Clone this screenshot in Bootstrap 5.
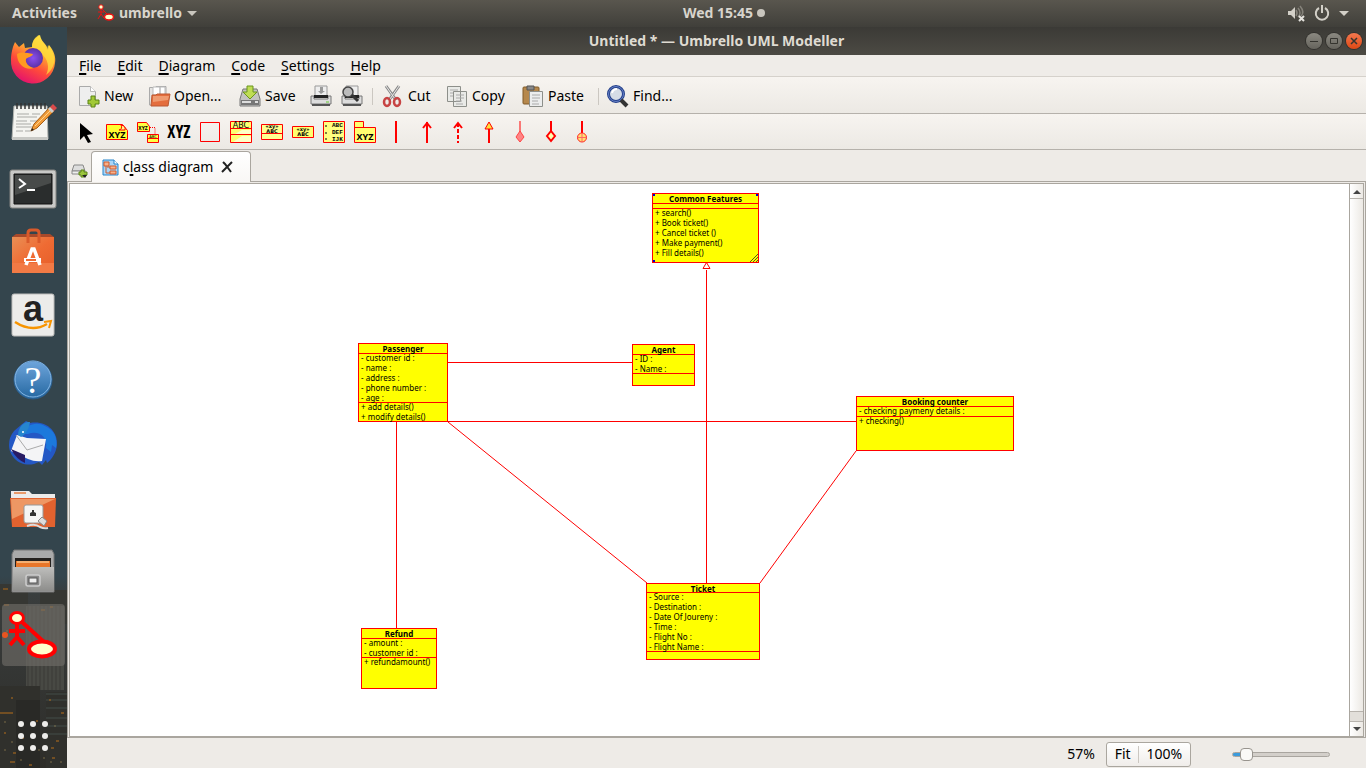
<!DOCTYPE html>
<html lang="en">
<head>
<meta charset="utf-8">
<meta name="viewport" content="width=device-width, initial-scale=1">
<title>Untitled * — Umbrello UML Modeller</title>
<link rel="stylesheet" href="https://cdn.jsdelivr.net/npm/bootstrap@5.3.0/dist/css/bootstrap.min.css">
<style>
body{font-family:"Noto Sans","Open Sans",sans-serif;font-size:14px;line-height:20px;color:#000;background:#eeebe7}
button{font:inherit;color:inherit;background:none;border:0;padding:0}
svg{display:block;flex:none;overflow:visible}
u{text-underline-offset:2px;text-decoration-thickness:2px}
.topbar{height:27px;background:linear-gradient(#59564e,#403f3a);color:#d8d5cd;font-weight:700;font-size:14px;padding-bottom:1px}
.topbar .leading{flex:0 0 50%}
.dock{width:67px;background:#34454d;position:relative}
.dock .skyline{position:absolute;left:0;bottom:0;width:67px;height:192px}
.dock button{height:64px;width:67px;position:relative;flex:none}
.dock .running svg{background:#73706b99;border-radius:4px}
.titlebar{height:28px;background:linear-gradient(#3b3a36,#4c4a44);color:#dfdbd2;font-weight:700;font-size:14px;display:grid;grid-template-columns:68px 1fr 68px}
.wbtn{width:16px;height:16px;border-radius:50%;background:linear-gradient(#8b8981,#66645d);box-shadow:0 0 0 1px #33322e}
.wbtn.quit{background:linear-gradient(#f5784f,#dd4814)}
.menubar{height:22px;border-bottom:1px solid #d5d1cb;background:#efece8}
.menubar a{color:#000;text-decoration:none}
.bar{height:37px;background:linear-gradient(#f7f4f0,#ece9e4);border-bottom:1px solid #b5b1ab}
.files{display:grid;grid-template-columns:70px 91px 71px 31px 31px 10px 64px 76px 76px 9px 80px;align-items:center;padding:2px 0 0 11px}
.files button{display:flex;align-items:center;gap:4px;white-space:nowrap}
.vsep{width:1px;height:17px;background:#cbc7c1}
.tools{display:grid;grid-template-columns:repeat(17,31px);height:36px;align-items:center}
.tools svg,.files svg{width:22px;height:22px}
.tabs{height:31px}
.doc-tab{height:31px;width:160px;border:1px solid #aaa69f;border-bottom:0;border-radius:4px 4px 0 0;background:linear-gradient(#fff,#f9f7f5);margin-bottom:-1px;position:relative;padding:0 10px}
.pane{border:1px solid #aaa69f;padding:1px 1px 0;min-height:0}
.frame{border:1px solid #aaa69f;background:#fff;min-height:0}
.canvas{position:relative;overflow:hidden}
.links{position:absolute;left:0;top:0;width:100%;height:100%}
.links path{fill:none;stroke:#f00}
.node{position:absolute;background:#ff0;border:1px solid #f00;font-size:8px;line-height:10px;white-space:nowrap}
.node h2{font-size:8px;line-height:10px;height:10px;margin:0;font-weight:700;text-align:center;border-bottom:1px solid #f00}
.node ul{list-style:none;margin:-1px 0 0;padding:0 0 0 2px}
.node ul.attrs{border-bottom:1px solid #f00}
#common{left:582px;top:9px;width:107px;height:70px}
#common .attrs{height:6px}
#passenger{left:288px;top:159px;width:90px;height:79px}
#passenger .attrs{height:50px}
#agent{left:562px;top:160px;width:63px;height:42px}
#agent .attrs{height:20px}
#booking{left:786px;top:212px;width:158px;height:55px}
#booking .attrs{height:11px}
#refund{left:291px;top:444px;width:76px;height:61px}
#refund .attrs{height:20px}
#ticket{left:576px;top:399px;width:114px;height:77px}
#ticket .attrs{height:60px}
#ticket h2{height:9px}
.grip{position:absolute}
.scroller{width:14px;border-left:1px solid #aaa69f;background:#e2dfda}
.scroller button{height:14px;background:linear-gradient(90deg,#fff,#ece9e4);display:flex;align-items:center;justify-content:center;flex:none}
.scroller .thumb{background:linear-gradient(90deg,#fff,#ece9e4);border:1px solid #b7b3ad;border-width:1px 0}
.scroller .groove{height:10px;border-bottom:1px solid #b7b3ad}
.statusbar{height:30px;padding:2px 36px 0 0}
.zoomset{border:1px solid #aaa69f;border-radius:3px;background:linear-gradient(#fff,#f0edea);height:25px;width:85px;margin:0 41px 0 11px}
.zoom-range{appearance:none;width:98px;height:20px;background:none;margin:0}
.zoom-range::-webkit-slider-runnable-track{height:5px;border:1px solid #a9a59f;border-radius:3px;background:linear-gradient(90deg,#3c9bdc 8px,#d3cfca 8px)}
.zoom-range::-webkit-slider-thumb{appearance:none;width:13px;height:13px;margin-top:-5px;background:#faf9f7;border:1px solid #98948e;border-radius:4px}
</style>
</head>
<body>
<div class="vh-100 d-flex flex-column overflow-hidden">
<header class="topbar d-flex align-items-center flex-shrink-0">
  <div class="leading d-flex align-items-center">
    <button class="ms-2 ps-1">Activities</button>
    <button class="d-flex align-items-center ms-3 ps-1">
      <svg width="18" height="18" viewBox="0 0 18 18"><g stroke="#e11" stroke-width="1" fill="none"><path d="M4 5v6M1 8h6M4 10l-3 5M4 10l3 4M5 5l6 6"/><circle cx="4" cy="3" r="2.200" fill="#ffc"/><ellipse cx="12" cy="13" rx="4.500" ry="3" fill="#ffc" stroke-width="1.500"/></g></svg>
      <span class="ms-1">umbrello</span>
      <svg class="ms-1" width="12" height="8" viewBox="0 0 12 8"><path d="M1 2h10L6 7z" fill="#c9c6be"/></svg>
    </button>
  </div>
  <button class="d-flex align-items-center gap-1 flex-shrink-0">Wed 15:45 <svg width="8" height="8"><circle cx="4" cy="4" r="4" fill="#c9c6be"/></svg></button>
  <div class="d-flex align-items-center justify-content-end gap-2 pe-3 flex-grow-1">
    <svg width="19" height="18" viewBox="0 0 19 18"><path d="M1 7h3l4-4v12l-4-4H1z" fill="#d3d0c8"/><path d="M9 6q2 3 0 6M11 4q4 5 0 9M13 2q5 6 1 10" stroke="#85827a" fill="none" stroke-width="1.500"/><path d="M12 12l5 5m0-5l-5 5" stroke="#e5e3de" stroke-width="2"/></svg>
    <svg width="16" height="16" viewBox="0 0 16 16"><path d="M5 3a6.200 6.200 0 1 0 6 0M8 0v8" fill="none" stroke="#d3d0c8" stroke-width="2"/></svg>
    <svg width="12" height="8" viewBox="0 0 12 8"><path d="M1 2h10L6 7z" fill="#d3d0c8"/></svg>
  </div>
</header>
<div class="d-flex flex-grow-1" style="min-height:0">
<nav class="dock d-flex flex-column flex-shrink-0" aria-label="Dock">
  <svg class="skyline" viewBox="0 0 67 192"><defs><linearGradient id="dusk" x2="0" y2="1"><stop stop-color="#34454d"/><stop offset=".1" stop-color="#393d3d"/><stop offset="1" stop-color="#2e2d29"/></linearGradient></defs><path fill="url(#dusk)" d="M0 0h67v192H0z"/><path d="M0 8h12l2-4h14v30H0zM40 14h27v34H40z" fill="#363733"/><path d="M26 30h38v84H26z" fill="#484944"/><path d="M28 30v84m4-84v84m4-84v84m4-84v84m4-84v84m4-84v84m4-84v84m4-84v84m4-84v84" stroke="#3b3b37"/><path d="M0 110h40v82H0zM46 116h21v76H46z" fill="#30302c"/><path d="M16 124h24v68H16z" fill="#292926"/><path d="M46 118h21M46 124h21m-21 8h21m-21 10h21M44 150h23m-23 8h23" stroke="#434c48"/><path d="M0 137h13M3 13h5m22 2h6m14 16h3M4 29h5m32 5h4M6 55h2m40 21h3M11 122h2m36 2h2m10 13h3M4 157h2m16 5h2m12-17h2m13 27h3m-41 5h3m40-12h3m-49 21h5m14 3h3m20-7h3" stroke="#98601f" stroke-width="2" opacity=".65"/><path d="M4 174h2m5-8h2m7 18h2m16-10h2m10 12h2M54 150h2M4 146h2m54 40h2M43 182h2" stroke="#a9915b" opacity=".6"/></svg>
  <button aria-label="Firefox"><svg width="67" height="64" viewBox="0 0 67 64"><defs><linearGradient id="ff" x1=".8" y1="0" x2=".3" y2="1"><stop stop-color="#fff44f"/><stop offset=".35" stop-color="#ffac30"/><stop offset=".65" stop-color="#ff4b3a"/><stop offset="1" stop-color="#e3106f"/></linearGradient><radialGradient id="fp"><stop stop-color="#8c4ff0"/><stop offset="1" stop-color="#5b32a8"/></radialGradient></defs><path d="M15 15l4 5 5-4 1 5 7-1c0-6 4-10 8-12 1 6 5 8 7 12l1 3 1-5c5 6 7 12 6 18A22 22 0 0 1 11 33c0-7 2-14 4-18z" fill="url(#ff)"/><path d="M39 8c1 6 5 8 7 12l1 3 1-5c5 6 7 12 6 18-1 5-4 9-8 12 4-7 2-17-5-21-4-3-8-3-9-7 0-6 3-10 7-12z" fill="#ffdf3c" opacity=".75"/><circle cx="33" cy="31" r="10" fill="url(#fp)"/><path d="M17 27c5-3 10-1 16 0-1 3-5 3-7 5-1 4 3 8 8 9-8 3-17-3-17-14z" fill="#ff9a20"/></svg></button>
  <button aria-label="Text Editor"><svg width="67" height="64" viewBox="0 0 67 64"><path d="M14 15h33l1 33H12z" fill="#f4f4f0" stroke="#b3b5b1"/><path d="M12 46h36v3H12z" fill="#c8c9c5"/><path d="M17 12v6m4-6v6m4-6v6m4-6v6m4-6v6m4-6v6m4-6v6m4-6v6" stroke="#333" stroke-width="1.500"/><path d="M17 23h12m3 0h8M17 26h20M16 30h11m3 0h8M16 33h15M16 36h18M16 40h7m2 0h6" stroke="#a9aaa6"/><path d="M31 40l3-7 16-17 4 4-17 17z" fill="#f19b38" stroke="#a65c12"/><path d="M35 35l16-16" stroke="#ffd28b"/><path d="M50 16l3-3 4 4-3 3z" fill="#d94a4a"/><path d="M48 18l2-2 4 4-2 2z" fill="#ccc"/><path d="M31 40l1-3 2 2z" fill="#222"/></svg></button>
  <button aria-label="Terminal"><svg width="67" height="64" viewBox="0 0 67 64"><rect x="10" y="15" width="46" height="38" rx="2" fill="#c9c9c7" stroke="#858582"/><path d="M14 19h38v30H14z" fill="#2a2d2d" stroke="#111"/><path d="M15 20h36v8L15 40z" fill="#484b4a"/><path d="M19 24l6 5-6 4" fill="none" stroke="#fff" stroke-width="2"/><path d="M27 35h8" stroke="#fff" stroke-width="2"/></svg></button>
  <button aria-label="Ubuntu Software"><svg width="67" height="64" viewBox="0 -1 67 64"><defs><linearGradient id="bag" x2="1" y2="1"><stop stop-color="#e98f55"/><stop offset=".5" stop-color="#ef6b33"/><stop offset="1" stop-color="#e55d29"/></linearGradient></defs><path d="M12 17l4-3h34l4 3z" fill="#a8492a"/><path d="M12 17h42v36H12z" fill="url(#bag)"/><path d="M12 43h42v10H12z" fill="#f27a45"/><path d="M28 23V13q0-3 3-3h5q3 0 3 3v10" stroke="#d95a2b" stroke-width="3" fill="none"/><path d="M26 45l6-16h2l6 16" fill="none" stroke="#fff" stroke-width="3.500"/><path d="M24 38h17v4H24z" fill="#fff"/><path d="M26 40h10" stroke="#ee6b35" stroke-width="2"/></svg></button>
  <button aria-label="Amazon"><svg width="67" height="64" viewBox="0 0 67 64"><rect x="12" y="11" width="42" height="42" rx="2" fill="#ececea" stroke="#bdbdbb"/><text x="33" y="38" font-family="Liberation Sans" font-weight="700" font-size="36" text-anchor="middle" fill="#222">a</text><path d="M15 39q17 11 32 2" stroke="#f79400" stroke-width="2.500" fill="none"/><path d="M44 39l7-1-2 7" stroke="#f79400" stroke-width="2" fill="none"/></svg></button>
  <button aria-label="Help"><svg width="67" height="64" viewBox="0 0 67 64"><defs><linearGradient id="hp" x2="0" y2="1"><stop stop-color="#6ea5dc"/><stop offset="1" stop-color="#2467a0"/></linearGradient></defs><circle cx="33" cy="33" r="19" fill="url(#hp)" stroke="#2a5d8c"/><circle cx="33" cy="32" r="18" fill="none" stroke="#83b4e2"/><text x="33" y="46" font-family="Liberation Serif" font-size="38" text-anchor="middle" fill="#fff">?</text></svg></button>
  <button aria-label="Thunderbird"><svg width="67" height="64" viewBox="0 0 67 64"><path d="M14 20l7-6 5-4 4 2c16-3 28 8 27 22-1 8-5 14-10 18l-1-3-4 5-3-3-5 2C20 56 9 46 9 34q0-8 5-14z" fill="#2458c5"/><path d="M20 23c6-9 16-13 25-8 9 4 13 12 11 22l-4-3-1 7-5-4c2-12-8-18-18-14z" fill="#1c79dc"/><path d="M17 24l10 3 19 1-4 22q-7 1-14-2l-17-8z" fill="#f4f4f6"/><path d="M16 24l11 15 16-5" stroke="#aaa" fill="none"/><path d="M18 24c0-8 6-14 12-13-1 7-4 12-9 15z" fill="#2686cf"/><path d="M11 38l14 6v8q-9-4-14-14z" fill="#281b64"/><circle cx="23" cy="21" r="1" fill="#fff"/></svg></button>
  <button aria-label="Network folder"><svg width="67" height="64" viewBox="0 -4 67 64"><path d="M11 28V12h18l3 3h23v10z" fill="#ecebea"/><path d="M14 14h12" stroke="#e99a6a" stroke-width="2"/><path d="M10 19h46l-1 29H12z" fill="#e2622f"/><path d="M11 20h44L12 40z" fill="#ee9764"/><rect x="24" y="26" width="19" height="18" rx="2" fill="#f5f5f4" stroke="#999"/><path d="M30 37v-3l2-1v-2h2v2l2 1v3z" fill="#333"/><path d="M27 47q8-3 13 1 4 2 8 1" stroke="#ddd" stroke-width="2" fill="none"/><path d="M38 42l4-4 5 4-3 5z" fill="#ddd" stroke="#888"/></svg></button>
  <button aria-label="Files"><svg width="67" height="64" viewBox="0 -1 67 64"><defs><linearGradient id="cab" x2="0" y2="1"><stop stop-color="#bebebc"/><stop offset="1" stop-color="#8d8d8b"/></linearGradient></defs><path d="M14 10h38l2 4v38H12V14z" fill="#aaa" stroke="#777"/><path d="M15 18h36v9H15z" fill="#25211e"/><path d="M16 21h34v6H16z" fill="#e8762a"/><path d="M17 22h32" stroke="#ffe7b8" stroke-width="1"/><path d="M13 27h41v24H13z" fill="url(#cab)"/><rect x="26" y="35" width="14" height="11" rx="2" fill="#888" stroke="#ccc" stroke-width="1.500"/><rect x="29" y="38" width="8" height="5" fill="#eee" stroke="#555"/></svg></button>
  <button class="running d-flex align-items-center" aria-label="Umbrello"><svg class="ms-auto me-auto" width="63" height="62" viewBox="0 0 63 62"><circle cx="3" cy="31" r="3" fill="#e95420"/><g fill="none" stroke="#f00" stroke-width="4"><path d="M15 20v14M7 27h16M15 33l-7 8M15 33l7 8M20 18l22 20"/><ellipse cx="15" cy="14" rx="6.500" ry="5.500" fill="#ffc" stroke-width="3"/><ellipse cx="40" cy="45" rx="13" ry="7.500" fill="#ffc"/></g></svg></button>
  <button class="mt-auto" aria-label="Show applications"><svg width="67" height="64" viewBox="0 0 67 64"><g fill="#eeedeb"><circle cx="21" cy="20" r="3"/><circle cx="33" cy="20" r="3"/><circle cx="45" cy="20" r="3"/><circle cx="21" cy="32" r="3"/><circle cx="33" cy="32" r="3"/><circle cx="45" cy="32" r="3"/><circle cx="21" cy="44" r="3"/><circle cx="33" cy="44" r="3"/><circle cx="45" cy="44" r="3"/></g></svg></button>
</nav>
<main class="d-flex flex-column flex-grow-1" style="min-width:0">
  <div class="titlebar align-items-center flex-shrink-0">
    <span></span><span class="text-center">Untitled * — Umbrello UML Modeller</span>
    <div class="d-flex gap-1 justify-content-end pe-1">
      <button class="wbtn" aria-label="Minimize"><svg width="16" height="16"><path d="M4 8.500h8" stroke="#35342f"/></svg></button>
      <button class="wbtn" aria-label="Maximize"><svg width="16" height="16"><path d="M4.500 5.500h7v5h-7z" fill="none" stroke="#35342f"/></svg></button>
      <button class="wbtn quit" aria-label="Close"><svg width="16" height="16"><path d="M5 5l6 6m0-6l-6 6" stroke="#35342f" stroke-width="1.500"/></svg></button>
    </div>
  </div>
  <nav class="menubar d-flex align-items-center flex-shrink-0 px-2" aria-label="Menu">
    <a href="#" class="ms-1"><u>F</u>ile</a><a href="#" class="ms-3"><u>E</u>dit</a><a href="#" class="ms-3"><u>D</u>iagram</a><a href="#" class="ms-3"><u>C</u>ode</a><a href="#" class="ms-3"><u>S</u>ettings</a><a href="#" class="ms-3"><u>H</u>elp</a>
  </nav>
  <div class="bar files flex-shrink-0">
    <button><svg viewBox="0 0 22 22"><path d="M1.500 1.500h11l5 5v14h-16z" fill="#eee" stroke="#aaa"/><path d="M12.500 1.500v5h5" fill="#fff" stroke="#bbb"/><path d="M13 11h4v4h4v4h-4v3h-4v-3h-3v-4h3z" fill="#a1c935" stroke="#5b8416"/></svg>New</button>
    <button><svg viewBox="0 0 22 22"><path d="M1.500 20V2.500H8v-1h10v19z" fill="#e5e4e2" stroke="#aaa"/><path d="M5 2h7v8H5zM12 2h5v8h-5z" fill="#fff" stroke="#bbb"/><path d="M4 10h4l1-1h13l-2 12H3z" fill="#e46d3d" stroke="#bb5932"/><path d="M5 11h16l-1 4-15 2z" fill="#ef9b70"/></svg>Open...</button>
    <button><svg viewBox="0 0 22 22"><path d="M4 4h14l3 10v7H1v-7z" fill="#c3c3c1" stroke="#777"/><path d="M2 15h18v5H2z" fill="#777"/><path d="M3 17h9m4 0h3" stroke="#ddd" stroke-width="2"/><path d="M8 1h6v6h4l-7 7-7-7h4z" fill="#bfdd54" stroke="#6b961d"/></svg>Save</button>
    <button aria-label="Print"><svg viewBox="0 0 22 22"><path d="M5 1h12v10H5z" fill="#eee" stroke="#999"/><path d="M10 2h3v4h2l-4 3-3-3h2z" fill="#999"/><path d="M1 11h3v3h14v-3h3v8H1z" fill="#ddd" stroke="#777"/><path d="M4 10h14v3H4z" fill="#222"/><path d="M2 20h18" stroke="#555" stroke-width="2"/><path d="M16 17h3" stroke="#6c3"/></svg></button>
    <button aria-label="Print preview"><svg viewBox="0 0 22 22"><path d="M5 1h12v10H5z" fill="#eee" stroke="#999"/><path d="M1 11h3v3h14v-3h3v8H1z" fill="#ddd" stroke="#777"/><path d="M4 10h14v3H4z" fill="#222"/><path d="M2 20h18" stroke="#555" stroke-width="2"/><circle cx="7" cy="7" r="5" fill="#bbb" stroke="#444" stroke-width="1.500"/><path d="M11 10l6 6" stroke="#333" stroke-width="3"/></svg></button>
    <span class="vsep"></span>
    <button><svg viewBox="0 0 22 22"><path d="M4 1l10 14M17 1L7 15" stroke="#888" stroke-width="3"/><path d="M4 1l9 13M17 1L8 14" stroke="#e8e8e8"/><ellipse cx="5" cy="17" rx="3" ry="4" fill="none" stroke="#c74444" stroke-width="2.500"/><ellipse cx="15" cy="17" rx="3" ry="4" fill="none" stroke="#c74444" stroke-width="2.500"/></svg>Cut</button>
    <button><svg viewBox="0 0 22 22"><path d="M1.500 1.500h13v15h-13zM7.500 6.500h13v15h-13z" fill="#e9eae7" stroke="#8d8f8a"/><path d="M4 5h8M4 8h3M4 11h3M10 10h8m-8 3h8m-8 3h6m-6 3h7" stroke="#aaa"/></svg>Copy</button>
    <button><svg viewBox="0 0 22 22"><rect x="1" y="2" width="16" height="17" rx="1" fill="#b6884c" stroke="#805b29"/><path d="M5 1h7v4H5z" fill="#888" stroke="#555"/><path d="M7.500 6.500h13v15h-13z" fill="#eceded" stroke="#8d8f8a"/><path d="M10 10h8m-8 3h8m-8 3h6m-6 3h7" stroke="#aaa"/></svg>Paste</button>
    <span class="vsep"></span>
    <button><svg viewBox="0 0 22 22"><circle cx="9" cy="9" r="7.500" fill="#d5dce6" stroke="#24408b" stroke-width="3"/><circle cx="9" cy="9" r="7.500" fill="none" stroke="#6680c6"/><path d="M14 15l6 6" stroke="#333" stroke-width="4"/><path d="M5 8q1-4 5-4" stroke="#fff" stroke-width="2" fill="none"/></svg>Find...</button>
  </div>
  <div class="bar tools flex-shrink-0 ps-2">
    <button aria-label="Select"><svg viewBox="0 0 22 22"><path d="M5 2l13 11-6 1 4 7-3 1-4-7-4 4z" fill="#000"/></svg></button>
    <button aria-label="Note"><svg viewBox="0 0 22 22"><path d="M.5 3.500h16l5 6v9H.5z" fill="#ffff30" stroke="red"/><path d="M15 4q5 1 4 5h-6q4-1 2-5" fill="#ff8" stroke="red"/><text x="11" y="17" font-size="9" font-weight="700" text-anchor="middle">XYZ</text></svg></button>
    <button aria-label="Anchor"><svg viewBox="0 0 22 22"><path d="M.5 1.500h9l3 4v5H.5zM10.500 13.500h11v8h-11z" fill="#ff4" stroke="red"/><path d="M13 6.500h5v7" fill="none" stroke="red" stroke-dasharray="1"/><path d="M11 17.500h10" stroke="red"/><text x="6" y="9" font-size="5" font-weight="700" text-anchor="middle">XYZ</text><text x="16" y="17" font-size="4" text-anchor="middle">ABC</text></svg></button>
    <button aria-label="Label"><svg viewBox="0 0 22 22"><text x="11" y="17" font-family="Open Sans Condensed,Liberation Sans Narrow" font-size="17" font-weight="700" text-anchor="middle">XYZ</text></svg></button>
    <button aria-label="Box"><svg viewBox="0 0 22 22"><path d="M1.500 1.500h19v19h-19z" fill="none" stroke="red"/></svg></button>
    <button aria-label="Class"><svg viewBox="0 0 22 22"><path d="M.5.500h21v21H.5z" fill="#ffff70" stroke="red"/><path d="M1 7.500h20m-20 6h20" stroke="red"/><path d="M12 9h9v4H5zM12 15h9v6H3z" fill="#ffffc8"/><text x="11" y="7" font-family="DejaVu Sans" font-size="8" text-anchor="middle">ABC</text></svg></button>
    <button aria-label="Interface"><svg viewBox="0 0 22 22"><path d="M.5 3.500h21v15H.5z" fill="#ffff90" stroke="red"/><path d="M1 12.500h20" stroke="red"/><text x="11" y="7" font-family="DejaVu Sans" font-size="5" font-weight="700" text-anchor="middle">«xy»</text><text x="11" y="12" font-family="DejaVu Sans" font-size="5" font-weight="700" text-anchor="middle">ABC</text></svg></button>
    <button aria-label="Datatype"><svg viewBox="0 0 22 22"><path d="M.5 5.500h21v11H.5z" fill="#ffff70" stroke="red"/><text x="11" y="10" font-family="DejaVu Sans" font-size="5" font-weight="700" text-anchor="middle">«xy»</text><text x="11" y="15" font-family="DejaVu Sans" font-size="5" font-weight="700" text-anchor="middle">ABC</text></svg></button>
    <button aria-label="Enum"><svg viewBox="0 0 22 22"><path d="M.5.500h21v21H.5z" fill="#ffff80" stroke="red"/><path d="M2 5h2m-2 7h2m-2 6h2" stroke="#000"/><g font-size="6" font-weight="700" font-family="Liberation Mono"><text x="9" y="6">ABC</text><text x="9" y="13">DEF</text><text x="9" y="20">IJK</text></g></svg></button>
    <button aria-label="Package"><svg viewBox="0 0 22 22"><path d="M.5.500h9v6h12v15H.5z" fill="#ffff70" stroke="red"/><path d="M1 6.500h9" stroke="red"/><text x="11" y="19" font-size="9" font-weight="700" text-anchor="middle">XYZ</text></svg></button>
    <button aria-label="Association"><svg viewBox="0 0 22 22"><path d="M11 0v22" stroke="red" stroke-width="2"/></svg></button>
    <button aria-label="Directed association"><svg viewBox="0 0 22 22"><path d="M11 1v21M7 7l4-5 4 5" fill="none" stroke="red" stroke-width="2"/></svg></button>
    <button aria-label="Dependency"><svg viewBox="0 0 22 22"><path d="M7 7l4-5 4 5" fill="none" stroke="red" stroke-width="2"/><path d="M11 2v20" stroke="red" stroke-width="2" stroke-dasharray="4 2"/></svg></button>
    <button aria-label="Generalization"><svg viewBox="0 0 22 22"><path d="M11 8v14" stroke="red" stroke-width="2"/><path d="M7 8l4-7 4 7z" fill="#ffe13a" stroke="red"/></svg></button>
    <button aria-label="Composition"><svg viewBox="0 0 22 22"><path d="M11 0v11" stroke="red"/><path d="M11 10l4 6-4 5-4-5z" fill="#ff8484" stroke="#f44"/></svg></button>
    <button aria-label="Aggregation"><svg viewBox="0 0 22 22"><path d="M11 0v10" stroke="red" stroke-width="2"/><path d="M11 10l4 5-4 5-4-5z" fill="#ffffb0" stroke="red" stroke-width="2"/></svg></button>
    <button aria-label="Containment"><svg viewBox="0 0 22 22"><path d="M11 0v12" stroke="red" stroke-width="2"/><circle cx="11" cy="16.500" r="4.500" fill="#ffe070" stroke="#f22"/><path d="M11 12v9M7 16.500h8" stroke="#f66"/></svg></button>
  </div>
  <div class="tabs d-flex align-items-end flex-shrink-0">
    <button class="ms-1 me-1" aria-label="New diagram"><svg width="16" height="17" viewBox="0 0 16 17"><path d="M3 1h9l2 6H1z" fill="#ddd" stroke="#888"/><path d="M1 7h13v3H1z" fill="#eee" stroke="#888"/><path d="M10 6h3v2h3v3h-3v2h-3v-2H8V8h2z" fill="#9bc53c" stroke="#5b8416"/><path d="M11 11h5l-2 3z" fill="#222"/></svg></button>
    <div class="doc-tab d-flex align-items-center">
      <svg width="17" height="17" viewBox="0 0 17 17"><path d="M1 1h11l4 4v11H1z" fill="#a8d5f8" stroke="#2685cb"/><path d="M12 1v4h4" fill="#fff" stroke="#2685cb"/><path d="M2 3h5v4H2zM8 7h6v3H8zM8 12h6v3H8z" fill="#f9b08a" stroke="#cf5a2d"/><path d="M4 7v7h4M5 8h3" fill="none" stroke="#cf5a2d"/></svg>
      <a href="#" class="ms-1 text-black text-decoration-none text-nowrap">c<u>l</u>ass diagram</a>
      <button class="ms-2" aria-label="Close tab"><svg width="12" height="12" viewBox="0 0 12 12"><path d="M2 1l2 2 6 8M11 1L7 5l-6 6" fill="none" stroke="#222" stroke-width="2"/></svg></button>
    </div>
  </div>
  <div class="pane d-flex flex-grow-1">
    <div class="frame d-flex flex-grow-1">
      <div class="canvas flex-grow-1">
        <svg class="links"><path d="M378 178.500h184M378 237.500h408M636.500 86v313M326.500 238v208M378 238l199 161M786 267l-96 132"/><path d="M633 84.500l3.500-6 3.500 6z" fill="#fff"/></svg>
        <section class="node" id="common"><h2>Common Features</h2><ul class="attrs"></ul><ul><li>+ search()</li><li>+ Book ticket()</li><li>+ Cancel ticket ()</li><li>+ Make payment()</li><li>+ Fill details()</li></ul>
          <svg class="grip top-0 start-0" width="105" height="68"><path d="M0 0h2v2H0zM103 0h2v2h-2zM0 66h2v2H0z" fill="#00c"/><path d="M97 68l8-8M100 68l5-5M103 68l2-2" stroke="#552"/></svg></section>
        <section class="node" id="passenger"><h2>Passenger</h2><ul class="attrs"><li>- customer id :</li><li>- name :</li><li>- address :</li><li>- phone number :</li><li>- age :</li></ul><ul><li>+ add details()</li><li>+ modify details()</li></ul></section>
        <section class="node" id="agent"><h2>Agent</h2><ul class="attrs"><li>- ID :</li><li>- Name :</li></ul></section>
        <section class="node" id="booking"><h2>Booking counter</h2><ul class="attrs"><li>- checking paymeny details :</li></ul><ul><li>+ checking()</li></ul></section>
        <section class="node" id="refund"><h2>Refund</h2><ul class="attrs"><li>- amount :</li><li>- customer id :</li></ul><ul><li>+ refundamount()</li></ul></section>
        <section class="node" id="ticket"><h2>Ticket</h2><ul class="attrs"><li>- Source :</li><li>- Destination :</li><li>- Date Of Joureny :</li><li>- Time :</li><li>- Flight No :</li><li>- Flight Name :</li></ul></section>
      </div>
      <div class="scroller d-flex flex-column flex-shrink-0">
        <button aria-label="Scroll up"><svg width="8" height="5"><path d="M0 5l4-4 4 4z" fill="#444"/></svg></button>
        <div class="thumb flex-grow-1"></div><div class="groove"></div>
        <button aria-label="Scroll down"><svg width="8" height="5"><path d="M0 0h8L4 4z" fill="#444"/></svg></button>
      </div>
    </div>
  </div>
  <footer class="statusbar d-flex align-items-center justify-content-end flex-shrink-0">
    <label for="zoom">57%</label>
    <div class="zoomset d-flex align-items-center justify-content-around px-1"><button>Fit</button><span class="vsep"></span><button>100%</button></div>
    <input type="range" id="zoom" class="zoom-range" min="0" max="100" value="8">
  </footer>
</main>
</div>
</div>
<script src="https://cdn.jsdelivr.net/npm/bootstrap@5.3.0/dist/js/bootstrap.bundle.min.js"></script>
</body>
</html>
